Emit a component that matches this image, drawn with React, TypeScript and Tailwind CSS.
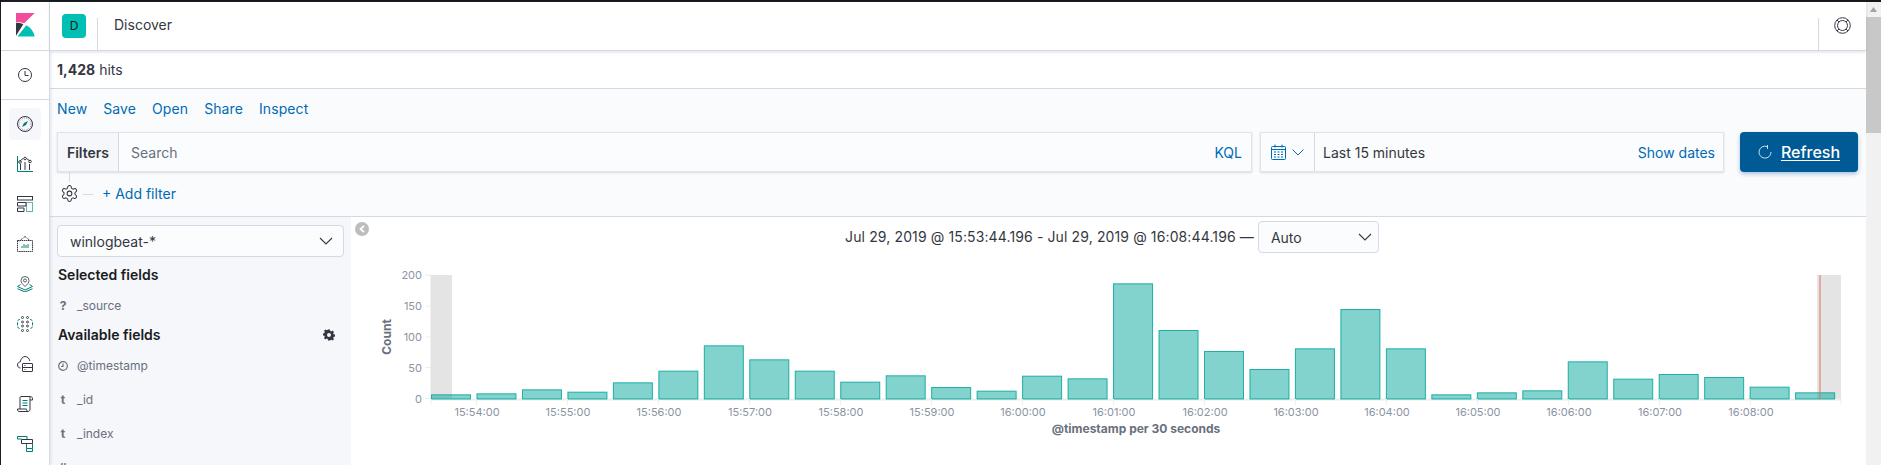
import React from "react";

const INK = "#343741";
const TEAL = "#017d73";

function Ico({ children, size = 16, vb = 16 }: { children: React.ReactNode; size?: number; vb?: number }) {
  return (
    <svg width={size} height={size} viewBox={`0 0 ${vb} ${vb}`} fill="none" stroke={INK} strokeWidth="1" className="block shrink-0">
      {children}
    </svg>
  );
}

const Chevron = ({ color = "#343741" }: { color?: string }) => (
  <svg width="14" height="8" viewBox="0 0 14 8" fill="none" stroke={color} strokeWidth="1.1" className="block shrink-0">
    <path d="M1 1l6 6 6-6" />
  </svg>
);

const Clock = () => (
  <Ico>
    <circle cx="8" cy="8" r="6.5" />
    <path d="M8 4v4.5h3.5" />
  </Ico>
);
const Compass = () => (
  <Ico>
    <circle cx="8" cy="8" r="7.5" />
    <circle cx="8" cy="8" r="6" strokeDasharray="1 1.2" strokeWidth="0.5" />
    <path d="M11 5L9 9 5 11l2-4z" fill={TEAL} stroke="none" />
  </Ico>
);
const Viz = () => (
  <Ico>
    <path d="M.5 0v15.5H16" stroke={TEAL} />
    <path d="M3.5 14V8M8 14V6M12.5 14V8" />
    <path d="M3 5l3-2.5M9.5 2.5L13 5" />
    <circle cx="3" cy="6" r="1.3" />
    <circle cx="8" cy="2.5" r="1.3" />
    <circle cx="13" cy="5.5" r="1.3" />
  </Ico>
);
const Dash = () => (
  <Ico>
    <rect x=".5" y=".5" width="15" height="3.5" />
    <path d="M.5 6.5H9V10H.5zM.5 12h6.500v3.500H.500z" />
    <rect x="9.500" y="6.500" width="6" height="9" stroke={TEAL} strokeOpacity=".6" />
  </Ico>
);
const Canvas = () => (
  <Ico>
    <path d="M.5 4.500L3 5M8 .5L3 4.500M8 .5l5 4" strokeDasharray="1.2 .8" />
    <path d="M.5 4.500h15v11H.500z" strokeDasharray="1.500 .6" />
    <path d="M5 12V10M7 12V8M9 12V9M11 12V8" stroke={TEAL} strokeWidth="1.200" strokeOpacity=".8" />
  </Ico>
);
const Maps = () => (
  <Ico>
    <path d="M8 10.500C5.500 8 4 6.700 4 4.500a4 4 0 018 0c0 2.200-1.500 3.500-4 6z" stroke="#5a5f6b" />
    <circle cx="8" cy="4.500" r="1.500" stroke="#5a5f6b" />
    <path d="M3.500 8.500L.5 10.500 8 14l7.500-3.500-3-2M.5 12.700L8 16l7.500-3.300" stroke={TEAL} />
  </Ico>
);
const ML = () => (
  <Ico>
    <g stroke={INK} strokeWidth=".9">
      <circle cx="5.500" cy="1.500" r="1" />
      <circle cx="10.500" cy="1.500" r="1" />
      <circle cx="5.500" cy="6" r="1" />
      <circle cx="10.500" cy="6" r="1" />
      <circle cx="5.500" cy="10" r="1" />
      <circle cx="10.500" cy="10" r="1" />
      <circle cx="5.500" cy="14.500" r="1" />
      <circle cx="10.500" cy="14.500" r="1" />
    </g>
    <path d="M3 3.500C1.500 3.500.5 4.500.5 6v4c0 1.500 1 2.500 2.500 2.500M13 3.500c1.500 0 2.500 1 2.500 2.500v4c0 1.500-1 2.500-2.500 2.500" stroke={TEAL} strokeDasharray="3 1.200" />
  </Ico>
);
const Infra = () => (
  <Ico>
    <path d="M3.500 12C1.500 12 .5 10.500.5 9c0-1.700 1.200-3 2.700-3C3.700 3 5.700.5 8 .5c2.500 0 4.500 2 4.800 4.500" />
    <rect x="5.500" y="7.500" width="10" height="8" rx=".5" />
    <path d="M5.500 11.500h10M7.500 9.500h1M7.500 13.500h1" />
  </Ico>
);
const Logs = () => (
  <Ico>
    <path d="M3 13V1.500C3 1 3.500.5 4 .5h9.500c1 0 2 .8 2 2v1.500H13M13 1v12.500c0 1-.8 2-2 2H2c-1 0-1.500-1-1.500-2.500H9.500c0 1 .5 2.500 1.500 2.500" />
    <path d="M5.500 4.500h5M5.500 7h5M5.500 9.500h5" stroke={TEAL} />
  </Ico>
);
const Apm = () => (
  <Ico>
    <path d="M.5 3V.5H10V3M.5 3h4" stroke={TEAL} />
    <path d="M4.500 3.500h11v4h-11z" />
    <path d="M9.500 8v4.500h6V8M9.500 12.500V15.500h6V12.500" stroke={TEAL} />
  </Ico>
);

const Gear = ({ size = 16 }: { size?: number }) => (
  <svg width={size} height={size} viewBox="0 0 24 24" fill="none" stroke={INK} strokeWidth="1.300" className="block shrink-0">
    <path d="M12.220 2h-.440a2 2 0 0 0-2 2v.180a2 2 0 0 1-1 1.730l-.430.250a2 2 0 0 1-2 0l-.150-.080a2 2 0 0 0-2.730.730l-.220.380a2 2 0 0 0 .730 2.730l.150.100a2 2 0 0 1 1 1.720v.510a2 2 0 0 1-1 1.740l-.150.090a2 2 0 0 0-.730 2.730l.220.380a2 2 0 0 0 2.730.730l.150-.080a2 2 0 0 1 2 0l.430.250a2 2 0 0 1 1 1.730V20a2 2 0 0 0 2 2h.440a2 2 0 0 0 2-2v-.180a2 2 0 0 1 1-1.730l.430-.250a2 2 0 0 1 2 0l.150.080a2 2 0 0 0 2.730-.730l.220-.390a2 2 0 0 0-.730-2.730l-.150-.080a2 2 0 0 1-1-1.740v-.500a2 2 0 0 1 1-1.740l.150-.090a2 2 0 0 0 .730-2.730l-.220-.380a2 2 0 0 0-2.730-.730l-.150.080a2 2 0 0 1-2 0l-.430-.250a2 2 0 0 1-1-1.730V4a2 2 0 0 0-2-2z" />
    <circle cx="12" cy="12" r="3" />
  </svg>
);

const NAV: { el: React.ReactNode; active?: boolean }[] = [
  { el: <Compass />, active: true },
  { el: <Viz /> },
  { el: <Dash /> },
  { el: <Canvas /> },
  { el: <Maps /> },
  { el: <ML /> },
  { el: <Infra /> },
  { el: <Logs /> },
  { el: <Apm /> },
];

function Sidebar() {
  return (
    <aside className="w-[49px] shrink-0 border-r border-[#d3dae6] bg-white flex flex-col overflow-hidden shadow-[1px_0_3px_rgba(152,162,179,0.25)] z-10">
      <div className="h-[49px] shrink-0 border-b border-[#d3dae6] flex items-start justify-center pt-[11px]">
        <svg width="19" height="24" viewBox="0 0 19 24" className="block">
          <path d="M0 0h18.700L8.200 10.300C5.500 9.300 2.800 8.900 0 8.900z" fill="#f04e98" />
          <path d="M0 9.800C2.600 9.800 5 10.300 7.300 11.200L0 22.800z" fill="#343741" />
          <path d="M1.500 23.500L10.300 12.300C14.800 14.800 17.800 18.500 18.700 23.500z" fill="#00bfb3" />
        </svg>
      </div>
      <div className="h-[49px] shrink-0 border-b border-[#d3dae6] flex items-center justify-center">
        <Clock />
      </div>
      <div className="flex flex-col items-center pt-[8px] gap-[8px]">
        {NAV.map((n, i) => (
          <div key={i} className={`w-[32px] h-[32px] shrink-0 rounded flex items-center justify-center ${n.active ? "bg-[#f5f7fa]" : ""}`}>
            {n.el}
          </div>
        ))}
      </div>
    </aside>
  );
}

function Header() {
  return (
    <header className="h-[49px] shrink-0 bg-white border-b border-[#d3dae6] shadow-[0_1px_3px_rgba(152,162,179,0.35)] flex items-stretch z-10">
      <div className="w-[47px] shrink-0 flex items-start justify-start pl-[12px] pt-[12px]">
        <div className="w-[24px] h-[24px] rounded-[4px] bg-[#00bfb3] flex items-center justify-center text-[12px] text-[#1a1c21]">D</div>
      </div>
      <div className="mt-[16px] w-px bg-[#d3dae6]" />
      <div className="flex-1 pl-[16px] pt-[11px] text-[14px] leading-[24px] text-[#343741]">Discover</div>
      <div className="mt-[16px] w-px bg-[#d3dae6]" />
      <div className="w-[47px] shrink-0 flex items-start justify-center pt-[15px]">
        <svg width="17" height="17" viewBox="0 0 17 17" fill="none" stroke={INK} strokeWidth="1" className="block">
          <circle cx="8.500" cy="8.500" r="7.800" />
          <circle cx="8.500" cy="8.500" r="5" />
          <path d="M3 3l2 2M14 3l-2 2M3 14l2-2M14 14l-2-2" />
        </svg>
      </div>
    </header>
  );
}

function Toolbar() {
  return (
    <section className="h-[128px] shrink-0 bg-[#fafbfd] border-b border-[#d3dae6] px-[7px] flex flex-col">
      <nav className="h-[42px] shrink-0 flex items-end pb-[12px] gap-[16px] text-[14px] leading-[20px] tracking-[0.1px] text-[#006bb4]">
        <span>New</span>
        <span>Save</span>
        <span>Open</span>
        <span>Share</span>
        <span>Inspect</span>
      </nav>
      <div className="mt-[1px] flex h-[40px] shrink-0">
        <div className="w-[1195px] shrink-0 flex bg-[#fbfcfd] border border-[#dfe3ea] shadow-[0_1px_2px_rgba(152,162,179,0.35)]">
          <div className="w-[61px] shrink-0 bg-[#f5f7fa] border-r border-[#d3dae6] flex items-center justify-center text-[14px] font-semibold text-[#343741]">Filters</div>
          <div className="flex-1 pl-[12px] pr-[9px] flex items-center justify-between text-[14px]">
            <span className="text-[#69707d]">Search</span>
            <span className="text-[#006bb4]">KQL</span>
          </div>
        </div>
        <div className="ml-[8px] w-[464px] shrink-0 flex bg-[#fbfcfd] border border-[#dfe3ea] shadow-[0_1px_2px_rgba(152,162,179,0.35)]">
          <div className="w-[54px] shrink-0 border-r border-[#d3dae6] flex items-center justify-center gap-[6px]">
            <svg width="15" height="16" viewBox="0 0 15 16" fill="none" stroke="#006bb4" strokeWidth="1" className="block">
              <rect x=".5" y="2.500" width="14" height="13" rx="1" />
              <path d="M.5 5.500h14M4 .5v3M11 .5v3" />
              <path d="M3 8h9M3 10.500h9M3 13h9" strokeDasharray="2 1.500" />
            </svg>
            <svg width="12" height="7" viewBox="0 0 12 7" fill="none" stroke="#006bb4" strokeWidth="1" className="block">
              <path d="M.5.5L6 6l5.500-5.500" />
            </svg>
          </div>
          <div className="flex-1 pl-[8px] pr-[8px] flex items-center justify-between text-[14px]">
            <span className="text-[#343741]">Last 15 minutes</span>
            <span className="text-[#006bb4]">Show dates</span>
          </div>
        </div>
        <div className="ml-[16px] w-[118px] shrink-0 rounded-[4px] bg-[#005a96] shadow-[0_2px_4px_rgba(0,90,150,0.35)] flex items-center justify-center gap-[9px] text-white text-[16px] font-medium">
          <svg width="14" height="14" viewBox="0 0 14 14" fill="none" stroke="#fff" strokeWidth="1" className="block opacity-80">
            <path d="M9 1.500A6 6 0 1 0 13 7M9.500 0v4" />
          </svg>
          <span className="underline underline-offset-2">Refresh</span>
        </div>
      </div>
      <div className="flex-1 relative flex items-start pt-[12px] pl-[3px] text-[14px] leading-[20px] text-[#006bb4]">
        <div className="absolute left-[12px] top-0 w-px h-[10px] bg-[#d3dae6]" />
        <Gear size={19} />
        <div className="ml-[4px] mt-[10px] w-[10px] h-px bg-[#d3dae6]" />
        <span className="ml-[9px]">+ Add filter</span>
      </div>
    </section>
  );
}

function Field({ icon, name, h }: { icon: React.ReactNode; name: string; h: number }) {
  return (
    <div className="flex items-center text-[12px] text-[#69707d]" style={{ height: h }}>
      <span className="w-[12px] shrink-0 flex items-center justify-center text-[#69707d] font-bold">{icon}</span>
      <span className="ml-[8px]">{name}</span>
    </div>
  );
}

function FieldPanel() {
  return (
    <div className="w-[301px] shrink-0 bg-[#f5f7fa] pl-[7px] pr-[7px] pt-[8px] overflow-hidden">
      <div className="h-[32px] rounded-[4px] border border-[#d3dae6] bg-[#fbfcfd] flex items-center justify-between pl-[12px] pr-[10px] text-[14px] text-[#343741]">
        <span>winlogbeat-*</span>
        <Chevron />
      </div>
      <div className="mt-[8px] pl-[1px] text-[14px] leading-[20px] font-semibold text-[#1a1c21]">Selected fields</div>
      <div className="mt-[8px]">
        <Field icon="?" name="_source" h={26} />
      </div>
      <div className="mt-[6px] pl-[1px] pr-[9px] flex items-center justify-between text-[14px] leading-[20px] font-semibold text-[#1a1c21]">
        <span>Available fields</span>
        <svg width="12" height="12" viewBox="0 0 12 12" className="block" fill="#343741">
          <path fillRule="evenodd" d="M5 .5h2l.3 1.500 1 .4L9.600 1.600l1.400 1.400-.8 1.300.4 1 1.500.300v2l-1.500.300-.4 1 .8 1.300-1.400 1.400-1.300-.8-1 .4L7 11.500H5l-.3-1.500-1-.4-1.300.8L1 9l.8-1.300-.4-1L0 6.400v-2l1.400-.3.4-1L1 1.800 2.400.4l1.300.8 1-.4zM6 4a2 2 0 1 0 0 4 2 2 0 0 0 0-4z" />
        </svg>
      </div>
      <div className="mt-[8px] flex flex-col gap-[8px]">
        <Field
          h={26}
          name="@timestamp"
          icon={
            <svg width="10" height="10" viewBox="0 0 10 10" fill="none" stroke="#69707d" strokeWidth="1.200" className="block">
              <circle cx="5" cy="5" r="4.300" />
              <path d="M5 2.500V5.500H3" />
            </svg>
          }
        />
        <Field h={26} name="_id" icon="t" />
        <Field h={26} name="_index" icon="t" />
        <Field h={26} name="_score" icon="#" />
      </div>
    </div>
  );
}

const TOPS = [538, 535, 523, 530, 502, 467, 391, 433, 467, 500, 481, 516, 527, 482, 490, 205, 345, 408, 462, 400, 282, 400, 538, 532, 526, 439, 491, 477, 486, 515, 532];
const TICKS = ["15:54:00", "15:55:00", "15:56:00", "15:57:00", "15:58:00", "15:59:00", "16:00:00", "16:01:00", "16:02:00", "16:03:00", "16:04:00", "16:05:00", "16:06:00", "16:07:00", "16:08:00"];
const YT: [string, number][] = [["200", 275], ["150", 306], ["100", 337], ["50", 367.500], ["0", 398.500]];

function Chart() {
  const ox = 351;
  const oy = 259;
  return (
    <svg width="1515" height="190" viewBox={`${ox} ${oy} 1515 190`} className="block" style={{ fontFamily: "Inter, sans-serif" }}>
      <rect x="430.500" y="275" width="21.500" height="124" fill="#e4e4e4" />
      <rect x="1817" y="275" width="24" height="124" fill="#e4e4e4" />
      <path d="M431 399.500H1841" stroke="#eeeeee" strokeWidth="2" />
      {TOPS.map((t, i) => {
        const x = 431 + i * 45.47;
        const y = 215 + t / 3;
        return <rect key={i} x={x + 0.5} y={y + 0.5} width={39} height={398.500 - y} fill="#00a69b" fillOpacity=".49" stroke="#00a69b" strokeOpacity=".85" strokeWidth="1" />;
      })}
      <rect x="1819" y="275" width="2" height="124" fill="#e7664c" fillOpacity=".45" />
      {[431, ...TICKS.map((_, i) => 476.500 + i * 91), 1841].map((x, i) => (
        <path key={i} d={`M${x} 399v6`} stroke="#eeeeee" strokeWidth="1" />
      ))}
      {TICKS.map((t, i) => (
        <text key={t} x={477 + i * 91} y="416" textAnchor="middle" fontSize="11" fill="#8b93a3">{t}</text>
      ))}
      {YT.map(([l, y]) => (
        <g key={l}>
          <path d={`M425 ${y}h6`} stroke="#eeeeee" />
          <text x="422" y={y + 4} textAnchor="end" fontSize="11" fill="#8b93a3">{l}</text>
        </g>
      ))}
      <text x="0" y="0" transform="translate(391 337) rotate(-90)" textAnchor="middle" fontSize="12" fontWeight="700" fill="#69707d">Count</text>
      <text x="1136" y="433" textAnchor="middle" fontSize="12" fontWeight="700" fill="#69707d">@timestamp per 30 seconds</text>
    </svg>
  );
}

function Main() {
  return (
    <div className="flex-1 min-w-0 bg-white relative overflow-hidden">
      <div className="absolute left-[4px] top-[5px] w-[14px] h-[14px] rounded-full bg-[#bdbdbf] flex items-center justify-center">
        <svg width="6" height="8" viewBox="0 0 6 8" fill="none" stroke="#fff" strokeWidth="1.800" className="block">
          <path d="M5 .8L1.500 4 5 7.200" />
        </svg>
      </div>
      <div className="h-[42px] flex items-start justify-center pt-[4px] pl-[7px] text-[14px] text-[#343741]">
        <span className="leading-[32px] mr-[4px] tracking-[0.12px]">Jul 29, 2019 @ 15:53:44.196 - Jul 29, 2019 @ 16:08:44.196 —</span>
        <div className="w-[121px] h-[32px] rounded-[4px] border border-[#d3dae6] bg-[#fbfcfd] flex items-center justify-between pl-[12px] pr-[6px]">
          <span>Auto</span>
          <Chevron />
        </div>
      </div>
      <Chart />
    </div>
  );
}

function Scrollbar() {
  return (
    <div className="w-[15px] shrink-0 bg-[#f1f1f1] flex flex-col items-center">
      <div className="h-[15px] shrink-0 flex items-center justify-center">
        <svg width="7" height="5" viewBox="0 0 7 5" className="block"><path d="M3.500 0L7 5H0z" fill="#a3a3a3" /></svg>
      </div>
      <div className="w-full h-[116px] bg-[#c8c8c8]" />
    </div>
  );
}

export default function App() {
  return (
    <div className="w-[1881px] h-[465px] overflow-hidden flex flex-col bg-white font-[family-name:Inter,sans-serif]">
      <div className="h-[2px] shrink-0 bg-[#14171c]" />
      <div className="flex-1 min-h-0 flex">
        <div className="w-px shrink-0 bg-[#14171c]" />
        <Sidebar />
        <div className="flex-1 min-w-0 flex flex-col">
          <Header />
          <div className="h-[38px] shrink-0 border-b border-[#d3dae6] pl-[7px] flex items-center text-[14px] text-[#343741]">
            <span className="font-bold">1,428</span>
            <span className="ml-[4px]">hits</span>
          </div>
          <Toolbar />
          <div className="flex-1 min-h-0 flex">
            <FieldPanel />
            <Main />
          </div>
        </div>
        <Scrollbar />
      </div>
    </div>
  );
}
